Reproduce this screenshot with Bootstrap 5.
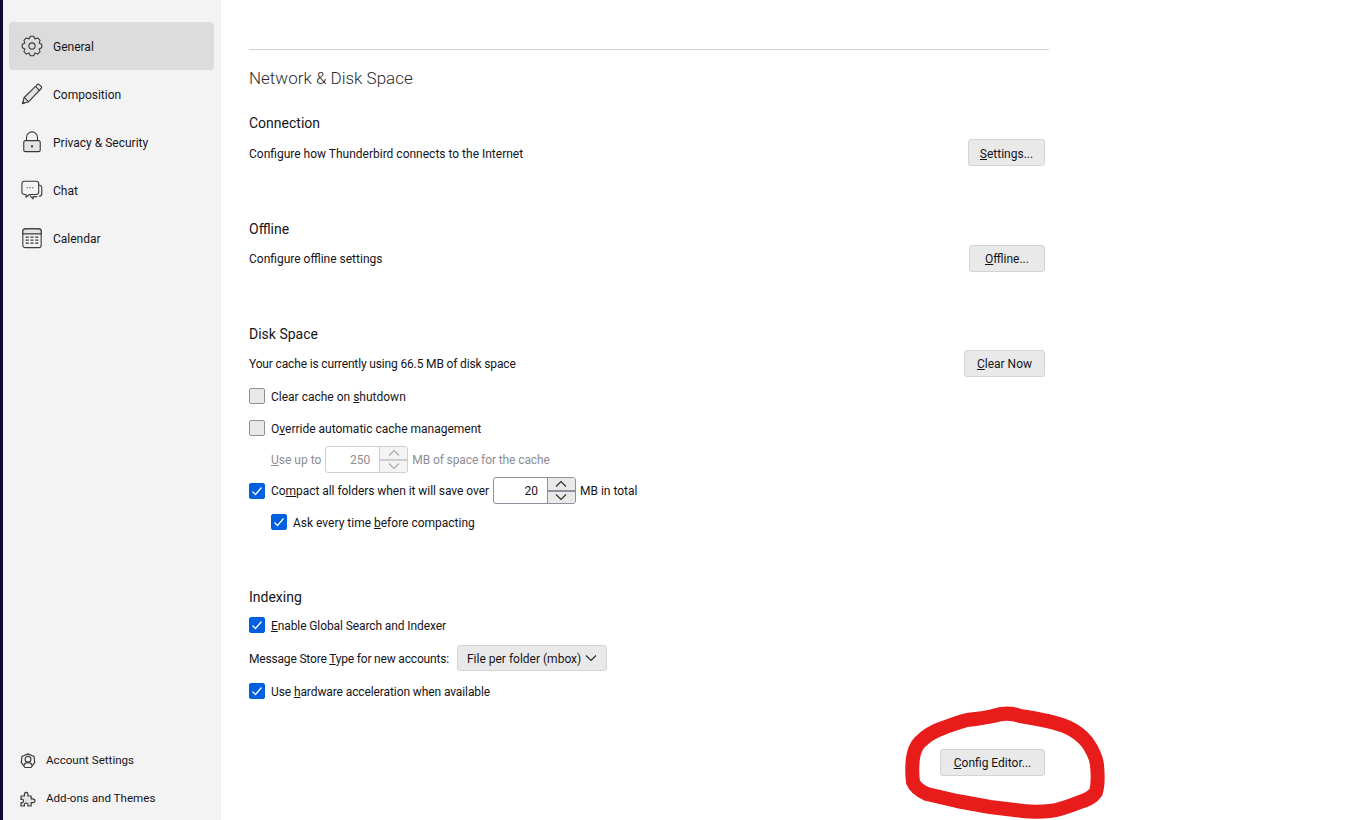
<!DOCTYPE html>
<html lang="en">
<head>
<meta charset="utf-8">
<title>Settings</title>
<link href="https://cdn.jsdelivr.net/npm/bootstrap@5.3.0/dist/css/bootstrap.min.css" rel="stylesheet">
<style>
html,body{height:820px;overflow:hidden}
body{font-family:Roboto,"Noto Sans","Liberation Sans",sans-serif;font-size:12px;color:#15141a;background:#fff;position:relative}
.edge-strip{width:3px;background:#0b0b33;flex:none}
.side-pane{width:218px;flex:none;background:#f3f3f3;height:820px;padding:22px 7px 0 6px}
.side-item{height:48px;border-radius:4px;padding-left:12px;gap:10px;color:#15141a;text-decoration:none;padding-top:1px}
.side-item.is-active{background:#dcdcdc}
.side-item svg{width:22px;height:22px;flex:none;margin-top:-2px}
.side-foot{padding-bottom:2px}
.foot-item{height:38px;padding-left:11px;gap:10px;color:#15141a;text-decoration:none;font-size:11.6px}
.foot-item svg{width:16px;height:16px;flex:none}
.ico{fill:#e4e4e4;stroke:#3a3a3a;stroke-width:1.2;stroke-linejoin:round;stroke-linecap:round}
.ico-n{fill:none}
.main-pane{padding:49px 0 0 28px;width:828px}
.rule-line{width:800px;border-top:1px solid #cfcfd8;height:1px}
.pane-title{font-size:17px;font-weight:300;line-height:24px;margin:16px 0 0;color:#2b2a30}
.sec-title{font-size:14px;font-weight:400;line-height:18px;margin:0;padding-top:1px}
.sec-body{width:796px}
.moz-btn{background:#e9e9e9;border:1px solid #d4d4d4;border-radius:3px;color:#15141a;font-size:12px;line-height:16px;padding:4px 0;height:27px;white-space:nowrap}
.moz-btn:hover{background:#e0e0e0}
.btn-w77{width:77px;padding-top:5px;padding-bottom:3px}
.btn-w76{width:76px}
.btn-w81{width:81px}
.btn-w105{width:105px}
.opt-row{gap:4px;white-space:nowrap}
.h31{height:31px}
.h32{height:32px}
.h34{height:34px}
.txt-low{padding-top:2px}
.tight-1{letter-spacing:-.05px}
.tight-2{letter-spacing:-.1px}
.tight-3{letter-spacing:-.15px}
.tight-4{letter-spacing:-.18px}
.tick{width:16px;height:16px;border-radius:2px;border:1px solid #8f8f9d;background:#e9e9e9;flex:none;display:flex;align-items:center;justify-content:center;margin-right:2px}
.tick.on{background:#0060df;border-color:#0060df}
.tick svg{width:12px;height:12px;display:block}
.spin-box{height:27px;width:83px;border:1px solid #8f8f9d;border-radius:3px;display:flex;overflow:hidden;background:#fff;flex:none}
.spin-box.off{border-color:#cfcfd2}
.spin-val{flex:1;text-align:right;padding:4px 9px 0 0;line-height:18px}
.spin-ctl{width:28px;border-left:1px solid #8f8f9d;display:flex;flex-direction:column;background:#e9e9e9}
.spin-box.off .spin-ctl{border-color:#cfcfd2;background:#f4f4f4}
.spin-ctl span{flex:1;display:flex;align-items:center;justify-content:center}
.spin-ctl span+span{border-top:2px solid #8f8f9d}
.spin-box.off .spin-ctl span+span{border-color:#cfcfd2}
.spin-ctl svg{width:14px;height:8px;stroke:#2b2b2b;fill:none;stroke-width:1.1}
.spin-box.off svg{stroke:#a8a8a8}
.is-faded{color:#8d8d92}
.sel-box{background:#e9e9e9;border:1px solid #d4d4d4;border-radius:3px;height:26px;width:150px;padding:0 9px;margin-left:4px}
.sel-box svg{width:12px;height:8px;stroke:#2b2b2b;fill:none;stroke-width:1.2}
.ink-layer{position:absolute;left:0;top:0;width:1353px;height:820px;pointer-events:none}
.gap-a{margin-top:23px}
.gap-b{margin-top:7px}
.gap-c{margin-top:53px}
.gap-c2{margin-top:52px}
.gap-d{margin-top:49px}
.gap-e{margin-top:3px}
.gap-f{margin-top:3px}
.gap-g{margin-top:42px}
.ind-1{padding-left:22px}
</style>
</head>
<body>
<div class="d-flex">
  <div class="edge-strip"></div>
  <nav class="side-pane d-flex flex-column justify-content-between">
    <div>
      <a class="side-item is-active d-flex align-items-center" href="#">
        <svg viewBox="0 0 24 24"><path class="ico ico-n" d="M10.120 1.360H13.880L15.180 4.330 18.190 3.150 20.850 5.810 19.670 8.820 22.640 10.120V13.880L19.670 15.180 20.850 18.190 18.190 20.850 15.180 19.670 13.880 22.640H10.120L8.820 19.670 5.810 20.850 3.150 18.190 4.330 15.180 1.360 13.880V10.120L4.330 8.820 3.150 5.810 5.810 3.150 8.820 4.330Z"/><circle class="ico ico-n" cx="12" cy="12" r="3.400"/></svg>
        <span>General</span></a>
      <a class="side-item d-flex align-items-center" href="#">
        <svg viewBox="0 0 24 24"><path class="ico" d="M1.500 22.500 3.500 15.800 17.800 1.800a1.600 1.600 0 0 1 2.200 0l2 2a1.600 1.600 0 0 1 0 2.200L8.200 20.500Z"/><path class="ico ico-n" d="M3.500 15.800 8.200 20.500M15.800 3.800l4.400 4.400"/><path d="M1.500 22.500 2.300 19.600 4.400 21.700Z" fill="#3a3a3a"/></svg>
        <span>Composition</span></a>
      <a class="side-item d-flex align-items-center" href="#">
        <svg viewBox="0 0 24 24"><path class="ico ico-n" d="M6 11V7a6 6 0 0 1 12 0V11"/><rect class="ico" x="3" y="10.500" width="18" height="12" rx="1.800"/><rect x="11" y="15.500" width="2" height="2.400" fill="#3a3a3a"/></svg>
        <span>Privacy &amp; Security</span></a>
      <a class="side-item d-flex align-items-center" href="#">
        <svg viewBox="0 0 24 24"><path class="ico ico-n" d="M19 6.500c2.600 0 3.700 1.200 3.700 3.500v5.500c0 1.800-.8 3-2.600 3.200M10 18.500l3.200 3.300v-2.600h4.200"/><path class="ico" style="fill:#f3f3f3" d="M3.600 2.500h13.100c1.600 0 2.600 1 2.600 2.600v9.200c0 1.600-1 2.600-2.600 2.600H9l-3.500 3v-3H3.600C2 16.900 1 15.900 1 14.300V5.100C1 3.500 2 2.500 3.600 2.500Z"/><path d="M6.200 9.500h1.400M9.200 9.500h1.400M12.200 9.500h1.400" stroke="#3a3a3a" stroke-width="1"/></svg>
        <span>Chat</span></a>
      <a class="side-item d-flex align-items-center" href="#">
        <svg viewBox="0 0 24 24"><rect class="ico" style="fill:#f3f3f3" x="2" y="2" width="20" height="20.500" rx="2.600"/><path class="ico" d="M2 7.500V4.600C2 3.100 3.100 2 4.600 2H19.400C20.900 2 22 3.100 22 4.600V7.500Z"/><path d="M5 11h3.500M10.200 11h3.500M15.500 11h3.500M5 14.300h3.500M10.200 14.300h3.500M15.500 14.300h3.500M5 17.600h3.500M10.200 17.600h3.500M15.500 17.600h3.500" stroke="#3a3a3a" stroke-width="1.500"/></svg>
        <span>Calendar</span></a>
    </div>
    <div class="side-foot">
      <a class="foot-item d-flex align-items-center" href="#">
        <svg viewBox="0 0 16 16"><path class="ico ico-n" d="M8 .9 14.100 3.500 14.700 9.700 11 14.500H5L1.300 9.700 1.900 3.500Z"/><circle class="ico ico-n" cx="8" cy="6.300" r="2.900"/><path class="ico ico-n" d="M3.800 12.500C4.300 10.500 6 9.700 8 9.700S11.700 10.500 12.200 12.500"/></svg>
        <span>Account Settings</span></a>
      <a class="foot-item d-flex align-items-center" href="#">
        <svg viewBox="0 0 16 16"><path class="ico" d="M1 5h3.500C4 3 4.700 1.300 6.200 1.300S8.400 3 7.900 5h3.300v3C13.300 7.500 15 8.200 15 9.700S13.300 12 11.200 11.500V15H7.900C8.400 13.300 7.700 12 6.200 12S4 13.300 4.500 15H1v-3.500C2.500 12 3.500 11.200 3.500 10S2.500 8 1 8.500Z"/></svg>
        <span>Add-ons and Themes</span></a>
    </div>
  </nav>
  <main class="main-pane">
    <div class="rule-line"></div>
    <h2 class="pane-title">Network &amp; Disk Space</h2>

    <h3 class="sec-title gap-a">Connection</h3>
    <div class="sec-body d-flex justify-content-between align-items-center gap-b">
      <span class="txt-low">Configure how Thunderbird connects to the Internet</span>
      <button class="moz-btn btn-w77" type="button"><u>S</u>ettings...</button>
    </div>

    <h3 class="sec-title gap-c">Offline</h3>
    <div class="sec-body d-flex justify-content-between align-items-center gap-b">
      <span>Configure offline settings</span>
      <button class="moz-btn btn-w76" type="button"><u>O</u>ffline...</button>
    </div>

    <h3 class="sec-title gap-c2">Disk Space</h3>
    <div class="sec-body d-flex justify-content-between align-items-center gap-b">
      <span class="tight-3">Your cache is currently using 66.5 MB of disk space</span>
      <button class="moz-btn btn-w81" type="button"><u>C</u>lear Now</button>
    </div>
    <div class="opt-row h32 d-flex align-items-center gap-e"><span class="tick"></span><span class="txt-low">Clear cache on <u>s</u>hutdown</span></div>
    <div class="opt-row h32 d-flex align-items-center"><span class="tick"></span><span class="txt-low">O<u>v</u>erride automatic cache management</span></div>
    <div class="opt-row h31 d-flex align-items-center ind-1 is-faded"><span><u>U</u>se up to</span>
      <span class="spin-box off"><span class="spin-val">250</span><span class="spin-ctl"><span><svg viewBox="0 0 14 8"><path d="M2 6.500 7 1.500 12 6.500"/></svg></span><span><svg viewBox="0 0 14 8"><path d="M2 1.500 7 6.500 12 1.500"/></svg></span></span></span>
      <span class="tight-2">MB of space for the cache</span></div>
    <div class="opt-row h31 d-flex align-items-center"><span class="tick on"><svg viewBox="0 0 12 12"><path d="M1.500 6.500 4.500 9.500 10.500 2.500" fill="none" stroke="#fff" stroke-width="1.200"/></svg></span><span class="tight-1">Co<u>m</u>pact all folders when it will save over</span>
      <span class="spin-box"><span class="spin-val">20</span><span class="spin-ctl"><span><svg viewBox="0 0 14 8"><path d="M2 6.500 7 1.500 12 6.500"/></svg></span><span><svg viewBox="0 0 14 8"><path d="M2 1.500 7 6.500 12 1.500"/></svg></span></span></span>
      <span>MB in total</span></div>
    <div class="opt-row h32 d-flex align-items-center ind-1"><span class="tick on"><svg viewBox="0 0 12 12"><path d="M1.500 6.500 4.500 9.500 10.500 2.500" fill="none" stroke="#fff" stroke-width="1.200"/></svg></span><span class="txt-low">Ask every time <u>b</u>efore compacting</span></div>

    <h3 class="sec-title gap-d">Indexing</h3>
    <div class="opt-row h32 d-flex align-items-center gap-f"><span class="tick on"><svg viewBox="0 0 12 12"><path d="M1.500 6.500 4.500 9.500 10.500 2.500" fill="none" stroke="#fff" stroke-width="1.200"/></svg></span><span class="txt-low tight-2"><u>E</u>nable Global Search and Indexer</span></div>
    <div class="d-flex align-items-center opt-row h34"><span class="txt-low tight-4">Message Store <u>T</u>ype for new accounts:</span>
      <span class="sel-box d-flex align-items-center justify-content-between"><span class="txt-low">File per folder (mbox)</span><svg viewBox="0 0 12 8"><path d="M1 1.500 6 6.500 11 1.500"/></svg></span></div>
    <div class="opt-row h32 d-flex align-items-center"><span class="tick on"><svg viewBox="0 0 12 12"><path d="M1.500 6.500 4.500 9.500 10.500 2.500" fill="none" stroke="#fff" stroke-width="1.200"/></svg></span><span class="txt-low tight-2">Use <u>h</u>ardware acceleration when available</span></div>

    <div class="sec-body d-flex justify-content-end gap-g">
      <button class="moz-btn btn-w105" type="button"><u>C</u>onfig Editor...</button>
    </div>
  </main>
</div>
<svg class="ink-layer" viewBox="0 0 1353 820"><path d="M993 716C1002 713 1012 713 1020 716C1040 719 1055 722 1067 727C1076 731 1082 736 1087 742C1092 749 1096 756 1097 765C1098 775 1098 785 1096 792C1092 798 1087 800 1080 802C1070 806 1060 810 1050 811C1040 812 1032 812 1023 811L990 807L957 801L927 794C920 791 915 787 913 782C912 774 912 766 913 758C914 751 916 746 920 742C926 736 934 731 943 728C951 725 959 722 967 720C976 719 985 718 993 716Z" fill="none" stroke="#e91c1c" stroke-width="14" stroke-linejoin="round" stroke-linecap="round"/></svg>
</body>
</html>
